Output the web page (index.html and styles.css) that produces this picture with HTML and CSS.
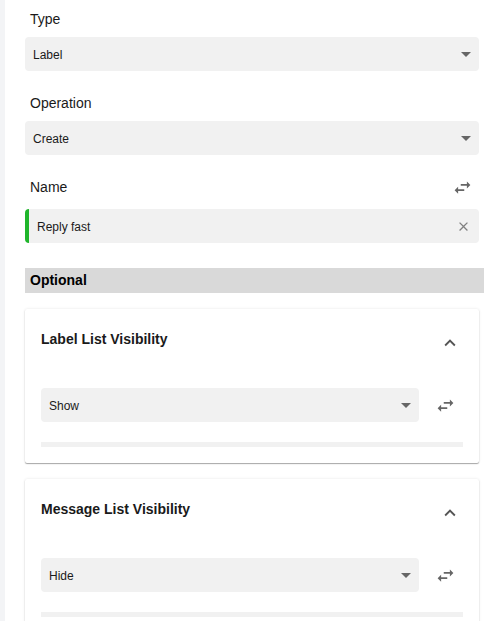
FILE: index.html
```html
<!DOCTYPE html>
<html lang="en">
<head>
  <meta charset="UTF-8">
  <meta name="viewport" content="width=device-width, initial-scale=1.0">
  <title>Label Action</title>
  <link rel="stylesheet" href="styles.css">
</head>
<body>
  <div class="panel">
    <!-- Required fields -->
    <div class="field first">
      <div class="field-label">Type</div>
      <div class="select">
        <span>Label</span>
        <span class="caret"></span>
      </div>
    </div>

    <div class="field">
      <div class="field-label">Operation</div>
      <div class="select">
        <span>Create</span>
        <span class="caret"></span>
      </div>
    </div>

    <div class="field">
      <div class="field-head">
        <div class="field-label">Name</div>
        <svg class="swap swap-name" width="21" height="21" viewBox="0 0 24 24"><path d="M6.99 11L3 15l3.99 4v-3H14v-2H6.99v-3zM21 9l-3.99-4v3H10v2h7.01v3L21 9z"/></svg>
      </div>
      <div class="text-input">
        <span>Reply fast</span>
        <svg class="clear" width="15" height="15" viewBox="0 0 24 24"><path d="M19 6.41L17.590 5 12 10.59 6.41 5 5 6.41 10.59 12 5 17.59 6.41 19 12 13.41 17.59 19 19 17.59 13.41 12z"/></svg>
      </div>
    </div>

    <!-- Optional section -->
    <div class="section-title">Optional</div>

    <div class="card">
      <div class="card-head">
        <div class="card-title">Label List Visibility</div>
        <svg class="chevron" width="22" height="22" viewBox="0 0 24 24"><path d="M12 8l-6 6 1.41 1.41L12 10.83l4.59 4.58L18 14z"/></svg>
      </div>
      <div class="card-row">
        <div class="select">
          <span>Show</span>
          <span class="caret"></span>
        </div>
        <svg class="swap" width="21" height="21" viewBox="0 0 24 24"><path d="M6.99 11L3 15l3.99 4v-3H14v-2H6.99v-3zM21 9l-3.99-4v3H10v2h7.01v3L21 9z"/></svg>
      </div>
      <div class="card-bar"></div>
    </div>

    <div class="card">
      <div class="card-head">
        <div class="card-title">Message List Visibility</div>
        <svg class="chevron" width="22" height="22" viewBox="0 0 24 24"><path d="M12 8l-6 6 1.41 1.41L12 10.83l4.59 4.58L18 14z"/></svg>
      </div>
      <div class="card-row">
        <div class="select">
          <span>Hide</span>
          <span class="caret"></span>
        </div>
        <svg class="swap" width="21" height="21" viewBox="0 0 24 24"><path d="M6.99 11L3 15l3.99 4v-3H14v-2H6.99v-3zM21 9l-3.99-4v3H10v2h7.01v3L21 9z"/></svg>
      </div>
      <div class="card-bar"></div>
    </div>
  </div>
</body>
</html>
```

FILE: styles.css
```css
body {
  margin: 0;
  font-family: "Liberation Sans", Arial, sans-serif;
  color: #1a1a1a;
  background-color: #fff;
  overflow: hidden;
}
.panel {
  border-left: 5px solid #f3f4f6;
  padding: 9px 16px 0 20px;
  min-height: 100vh;
  box-sizing: border-box;
}
.field {
  margin-top: 22px;
}
.field.first {
  margin-top: 0;
}
.field-label {
  font-size: 14px;
  line-height: 20px;
  padding-left: 5px;
  margin-bottom: 8px;
}
.field-head {
  display: flex;
  align-items: center;
  justify-content: space-between;
  height: 28px;
  margin: -4px 0 8px;
}
.field-head .field-label {
  margin-bottom: 0;
}
.select, .text-input {
  display: flex;
  align-items: center;
  justify-content: space-between;
  height: 34px;
  padding: 1px 8px 0;
  background-color: #f1f1f1;
  border-radius: 4px;
  font-size: 12px;
  box-sizing: border-box;
}
.caret {
  width: 0;
  height: 0;
  border-left: 5px solid transparent;
  border-right: 5px solid transparent;
  border-top: 5px solid #666;
}
.text-input {
  border-left: 4px solid #1fb52b;
  padding-right: 8px;
}
.clear {
  fill: #808080;
  margin-top: -1px;
}
.swap {
  fill: #666;
  flex-shrink: 0;
}
.swap-name {
  margin-right: 6px;
}
.section-title {
  margin: 25px -5px 16px 0;
  height: 25px;
  line-height: 25px;
  padding-left: 5px;
  background-color: #d9d9d9;
  font-size: 14px;
  font-weight: bold;
  color: #000;
}
.card {
  padding: 20px 16px 16px;
  margin-bottom: 16px;
  background-color: #fff;
  border-radius: 2px;
  box-shadow: 0 1px 1px rgba(0, 0, 0, 0.32), 0 0 3px rgba(0, 0, 0, 0.1);
}
.card-head {
  display: flex;
  justify-content: space-between;
  align-items: flex-start;
  height: 27px;
  margin-bottom: 32px;
}
.card-title {
  font-size: 14px;
  line-height: 20px;
  font-weight: bold;
  color: #1a1a1a;
}
.chevron {
  fill: #555;
  margin-top: 3px;
  margin-right: 2px;
}
.card-row {
  display: flex;
  align-items: center;
  gap: 16px;
}
.card-row .select {
  flex: 1;
}
.card-row .swap {
  margin-right: 7px;
}
.card-bar {
  height: 5px;
  margin-top: 20px;
  background-color: #f1f1f1;
}
```
